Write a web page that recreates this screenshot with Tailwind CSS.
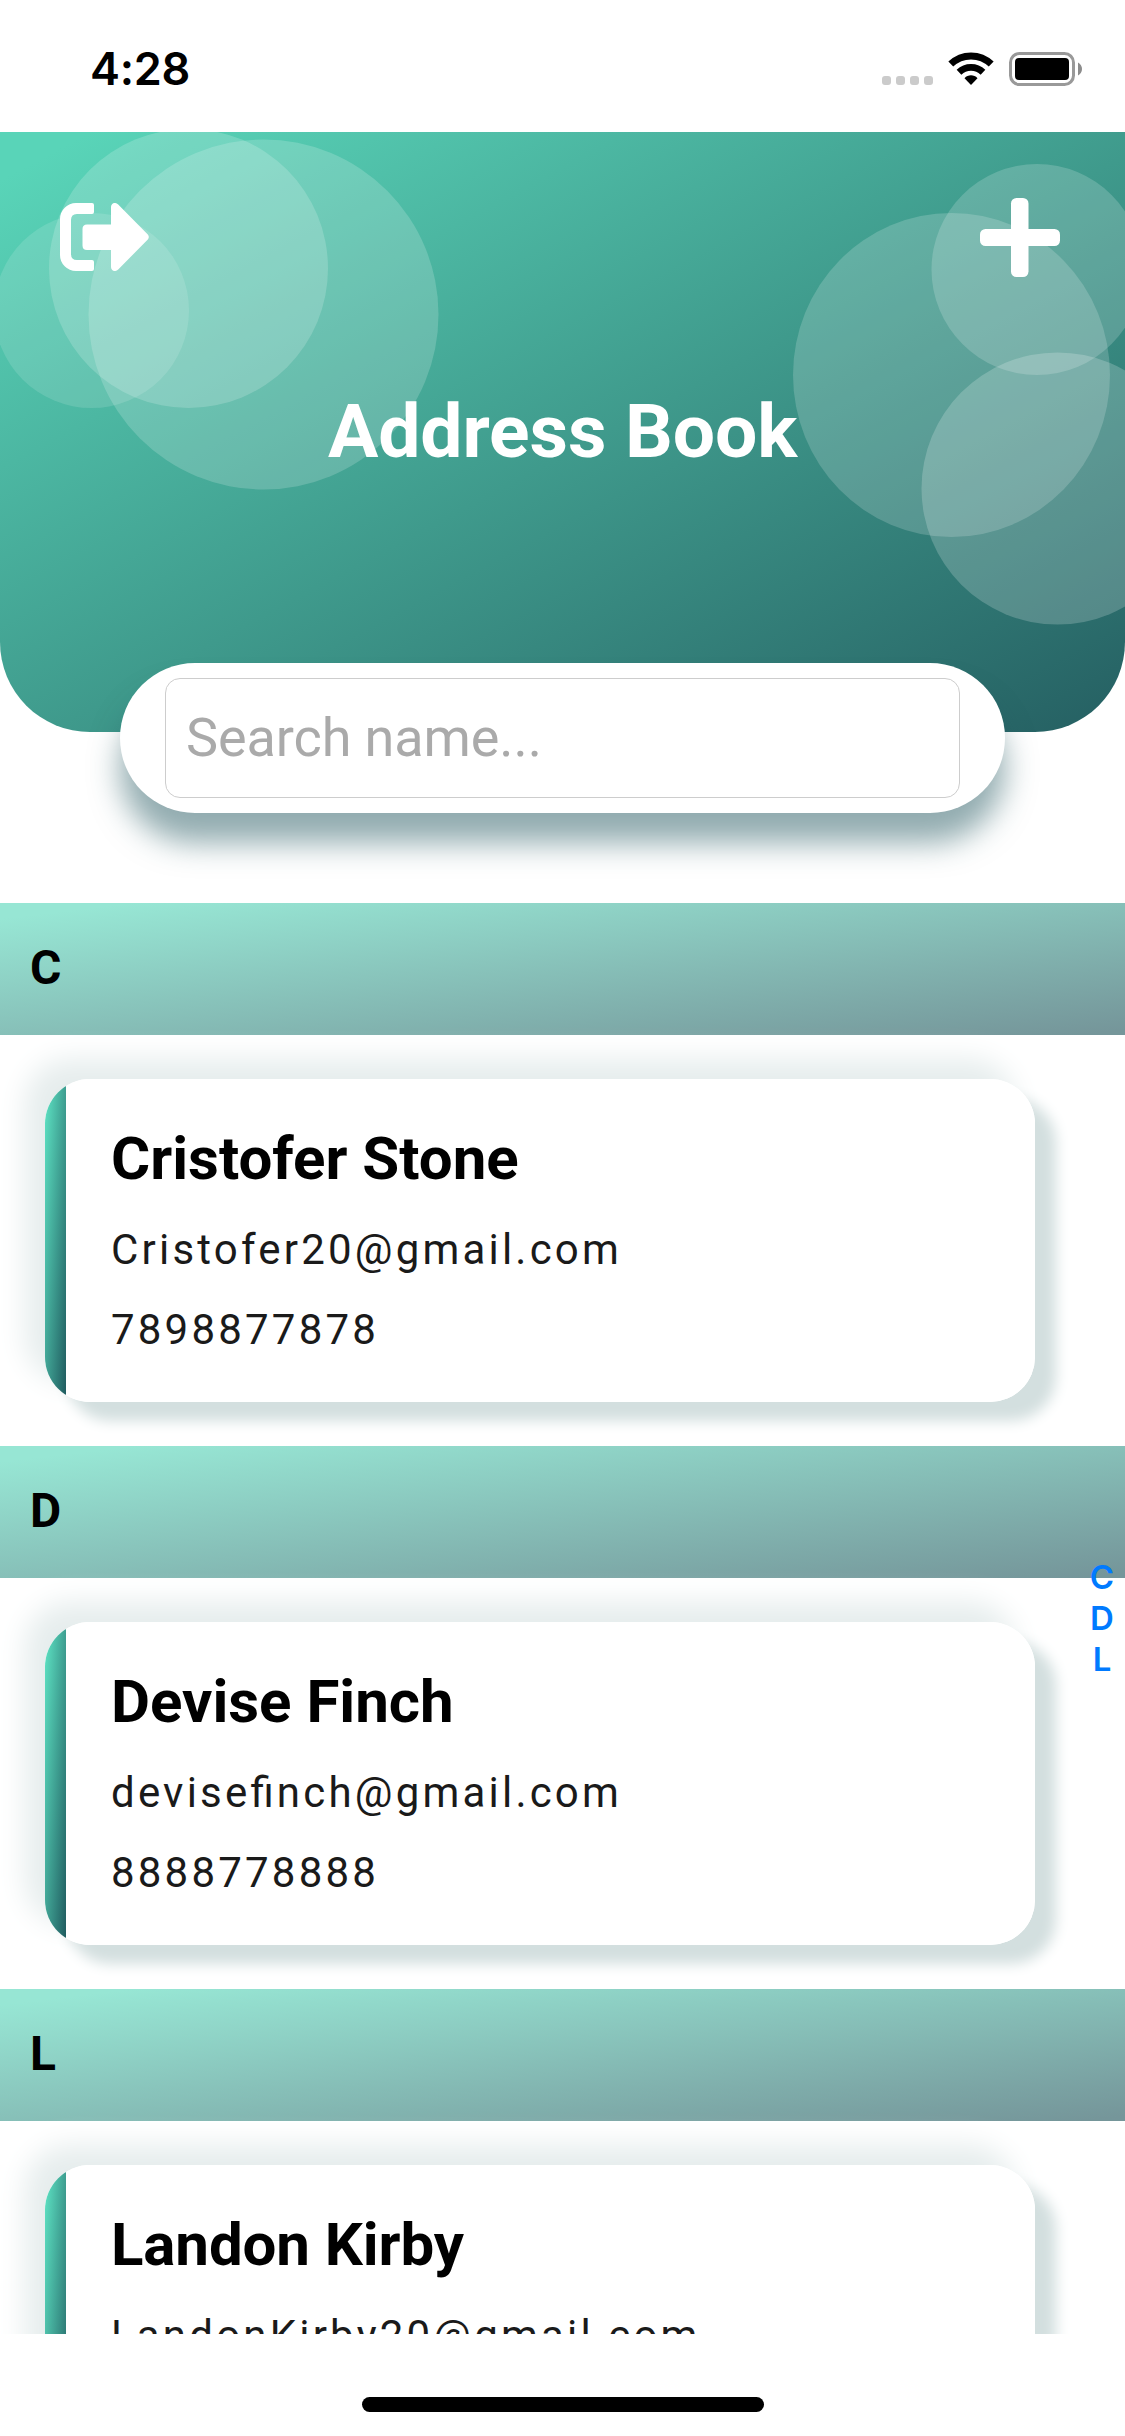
<!DOCTYPE html>
<html lang="en">
<head>
<meta charset="utf-8">
<title>Address Book</title>
<script src="https://cdn.jsdelivr.net/npm/@tailwindcss/browser@4"></script>
</head>
<body class="bg-white">
<div class="relative flex h-[2436px] w-[1125px] flex-col overflow-hidden bg-white font-['Roboto',sans-serif] text-black">

  <!-- Status bar -->
  <div class="flex h-[132px] shrink-0 items-start justify-between pr-[43px] pl-[90px]">
    <span class="mt-[41px] font-['Inter',sans-serif] text-[45px] leading-[56px] font-semibold tracking-[-0.3px]">4:28</span>
    <div class="mt-[52px] flex items-start">
      <div class="mt-[24px] mr-[15px] flex gap-[5px]">
        <i class="size-[9px] rounded-[3px] bg-[#cbcbcb]"></i>
        <i class="size-[9px] rounded-[3px] bg-[#cbcbcb]"></i>
        <i class="size-[9px] rounded-[3px] bg-[#cbcbcb]"></i>
        <i class="size-[9px] rounded-[3px] bg-[#cbcbcb]"></i>
      </div>
      <svg class="mr-[15px] h-[34px] w-[46px]" viewBox="0 0 46 34" fill="none">
        <path d="M2.8 12.1A29 29 0 0 1 43.2 12.1" stroke="#000" stroke-width="7"/>
        <path d="M11 20.3A17.3 17.3 0 0 1 35 20.3" stroke="#000" stroke-width="6.8"/>
        <path d="M16.5 26.2C20 22.4 26 22.4 29.5 26.2L23 33Z" fill="#000"/>
      </svg>
      <svg class="h-[34px] w-[73px]" viewBox="0 0 73 34" fill="none">
        <rect x="1.5" y="1.5" width="63" height="31" rx="9" stroke="#999" stroke-width="3"/>
        <rect x="6" y="6" width="54" height="22" rx="4" fill="#000"/>
        <path d="M69 10.5C71.500 12 73 14.300 73 17C73 19.700 71.500 22 69 23.500Z" fill="#8c8c8c"/>
      </svg>
    </div>
  </div>

  <!-- Header -->
  <header class="relative flex h-[600px] shrink-0 items-center justify-center overflow-hidden rounded-b-[90px] bg-linear-to-br/srgb from-[#59d4b8] from-4% via-[#3f9a8c] via-52% to-[#255f62]">
    <svg class="absolute inset-0 h-full w-full" viewBox="0 0 1125 600" fill="#fff" fill-opacity=".18">
      <circle cx="188.500" cy="136.500" r="139.500"/>
      <circle cx="263.500" cy="182.500" r="175"/>
      <circle cx="91.500" cy="178.500" r="97.500" fill-opacity=".13"/>
      <circle cx="1037" cy="137.500" r="105.500"/>
      <ellipse cx="951.500" cy="243" rx="158.500" ry="162"/>
      <circle cx="1057.500" cy="356.500" r="136" fill-opacity=".2"/>
    </svg>
    <svg class="absolute top-[71px] left-[60px] h-[68px] w-[89px]" viewBox="0 0 89 68" fill="#fff">
      <path d="M16 0H32Q34 0 34 2V9Q34 11 32 11H17Q11 11 11 17V51Q11 57 17 57H32Q34 57 34 59V66Q34 68 32 68H16A16 16 0 0 1 0 52V16A16 16 0 0 1 16 0Z"/>
      <path d="M27 21.500H51V4C51 0 55.500-1.300 58.200 1.400L87.800 31.600Q89.800 34 87.800 36.400L58.200 66.600C55.500 69.300 51 68 51 64V47H27Q22.500 47 22.500 42.500V26Q22.500 21.500 27 21.500Z"/>
    </svg>
    <svg class="absolute top-[66px] left-[980px] h-[79px] w-[80px]" viewBox="0 0 80 79" fill="#fff">
      <rect x="31" y="0" width="17.500" height="79" rx="5.500"/>
      <rect x="0" y="31" width="80" height="17" rx="5.500"/>
    </svg>
    <h1 class="relative mb-[3px] text-[75px] leading-[88px] font-bold tracking-[-0.1px] text-white">Address Book</h1>
  </header>

  <!-- Search -->
  <div class="relative mx-[120px] -mt-[69px] mb-[90px] h-[150px] shrink-0 rounded-full bg-white px-[45px] py-[15px] shadow-[0_30px_30px_rgba(38,90,98,0.5)]">
    <div class="flex h-[120px] items-center rounded-[15px] border border-[#cdcdcd] px-[20px] text-[54px] leading-[64px] tracking-[-0.1px] text-[#aaa]">Search name...</div>
  </div>

  <!-- Contact list -->
  <main class="h-[1431px] shrink-0 overflow-hidden">
    <section class="h-[543px]">
      <h2 class="flex h-[132px] items-center bg-linear-to-br/srgb from-[#97e6d4] from-6% to-[#75969a] to-98% px-[30px] pb-[3px] text-[48px] leading-none font-bold">C</h2>
      <div class="mt-[44px] ml-[45px] flex h-[323px] w-[990px] rounded-[45px] shadow-[21px_19px_14px_#d3dfdf,-20px_-20px_28px_#e6eded]">
        <div class="flex h-full w-full overflow-hidden rounded-[45px] bg-white">
          <div class="w-[21px] bg-linear-to-br/srgb from-[#5fe6c6] to-[#1f5a5e]"></div>
          <div class="flex flex-col pt-[45px] pl-[45px]">
            <div class="text-[60px] leading-[70px] font-bold">Cristofer Stone</div>
            <div class="mt-[31px] text-[42px] leading-[50px] tracking-[3.2px] text-[#1a1a1a]">Cristofer20@gmail.com</div>
            <div class="mt-[30px] text-[42px] leading-[50px] tracking-[3.2px] text-[#1a1a1a]">7898877878</div>
          </div>
        </div>
      </div>
    </section>
    <section class="h-[543px]">
      <h2 class="flex h-[132px] items-center bg-linear-to-br/srgb from-[#97e6d4] from-6% to-[#75969a] to-98% px-[30px] pb-[3px] text-[48px] leading-none font-bold">D</h2>
      <div class="mt-[44px] ml-[45px] flex h-[323px] w-[990px] rounded-[45px] shadow-[21px_19px_14px_#d3dfdf,-20px_-20px_28px_#e6eded]">
        <div class="flex h-full w-full overflow-hidden rounded-[45px] bg-white">
          <div class="w-[21px] bg-linear-to-br/srgb from-[#5fe6c6] to-[#1f5a5e]"></div>
          <div class="flex flex-col pt-[45px] pl-[45px]">
            <div class="text-[60px] leading-[70px] font-bold">Devise Finch</div>
            <div class="mt-[31px] text-[42px] leading-[50px] tracking-[3.2px] text-[#1a1a1a] [font-feature-settings:'liga'_1]">devisefinch@gmail.com</div>
            <div class="mt-[30px] text-[42px] leading-[50px] tracking-[3.2px] text-[#1a1a1a]">8888778888</div>
          </div>
        </div>
      </div>
    </section>
    <section class="h-[543px]">
      <h2 class="flex h-[132px] items-center bg-linear-to-br/srgb from-[#97e6d4] from-6% to-[#75969a] to-98% px-[30px] pb-[3px] text-[48px] leading-none font-bold">L</h2>
      <div class="mt-[44px] ml-[45px] flex h-[323px] w-[990px] rounded-[45px] shadow-[21px_19px_14px_#d3dfdf,-20px_-20px_28px_#e6eded]">
        <div class="flex h-full w-full overflow-hidden rounded-[45px] bg-white">
          <div class="w-[21px] bg-linear-to-br/srgb from-[#5fe6c6] to-[#1f5a5e]"></div>
          <div class="flex flex-col pt-[45px] pl-[45px]">
            <div class="text-[60px] leading-[70px] font-bold tracking-[-0.1px]">Landon Kirby</div>
            <div class="mt-[31px] text-[42px] leading-[50px] tracking-[3.2px] text-[#1a1a1a]">LandonKirby20@gmail.com</div>
          </div>
        </div>
      </div>
    </section>
  </main>

  <!-- Section index -->
  <nav class="absolute top-[1557px] right-[3px] flex w-[40px] flex-col text-center font-['Inter',sans-serif] text-[33px] leading-[41px] font-semibold text-[#007aff]">
    <span>C</span><span>D</span><span>L</span>
  </nav>

  <!-- Home indicator -->
  <div class="mx-auto mt-[63px] h-[15px] w-[402px] shrink-0 rounded-full bg-black"></div>
</div>
</body>
</html>
